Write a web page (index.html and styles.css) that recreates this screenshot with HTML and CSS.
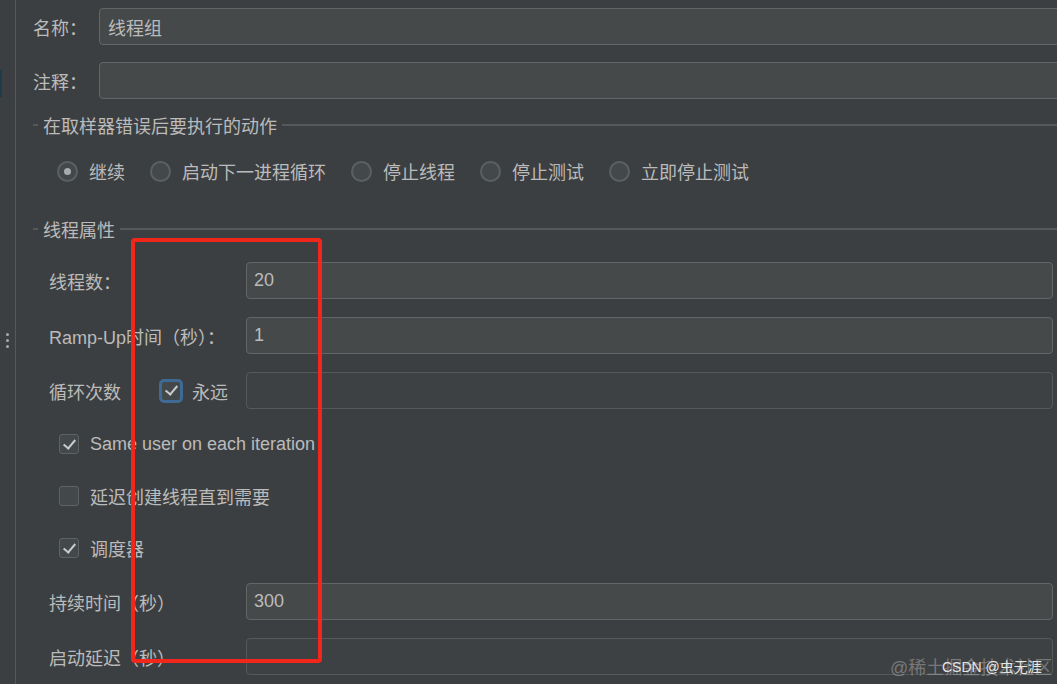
FILE: index.html
```html
<!DOCTYPE html>
<html lang="zh-CN">
<head>
    <meta charset="UTF-8">
    <title>线程组</title>
    <link rel="stylesheet" href="styles.css">
</head>
<body>
    <div class="window">
        <div class="side">
            <div class="side-mark"></div>
            <div class="grip"><span></span><span></span><span></span></div>
        </div>

        <div class="panel">
            <div class="row top-row">
                <label class="top-label">名称：</label>
                <div class="field">线程组</div>
            </div>
            <div class="row top-row gap-17">
                <label class="top-label">注释：</label>
                <div class="field"></div>
            </div>

            <div class="group-title title-1">
                <span class="dash"></span>
                <span class="legend">在取样器错误后要执行的动作</span>
                <span class="line"></span>
            </div>
            <div class="radios">
                <div class="radio-item"><span class="radio on"></span>继续</div>
                <div class="radio-item"><span class="radio"></span>启动下一进程循环</div>
                <div class="radio-item"><span class="radio"></span>停止线程</div>
                <div class="radio-item"><span class="radio"></span>停止测试</div>
                <div class="radio-item"><span class="radio"></span>立即停止测试</div>
            </div>

            <div class="group-title title-2">
                <span class="dash"></span>
                <span class="legend">线程属性</span>
                <span class="line"></span>
            </div>

            <div class="props">
                <div class="row prop">
                    <label class="prop-label">线程数：</label>
                    <div class="field box">20</div>
                </div>
                <div class="row prop">
                    <label class="prop-label">Ramp-Up时间（秒）：</label>
                    <div class="field box">1</div>
                </div>
                <div class="row prop">
                    <label class="loop-label">循环次数</label>
                    <span class="check checked focus"></span>
                    <span class="loop-text">永远</span>
                    <div class="field box disabled"></div>
                </div>
                <div class="row check-row">
                    <span class="check checked"></span>Same user on each iteration
                </div>
                <div class="row check-row">
                    <span class="check"></span>延迟创建线程直到需要
                </div>
                <div class="row check-row">
                    <span class="check checked"></span>调度器
                </div>
                <div class="row prop">
                    <label class="prop-label">持续时间（秒）</label>
                    <div class="field box">300</div>
                </div>
                <div class="row prop">
                    <label class="prop-label">启动延迟（秒）</label>
                    <div class="field box disabled"></div>
                </div>
            </div>
        </div>

        <!-- annotation drawn over the screenshot -->
        <div class="highlight"></div>
        <div class="watermark">
            <span class="wm-back">@稀土掘金技术社区</span>
            <span class="wm-front">CSDN @虫无涯</span>
        </div>
    </div>
</body>
</html>
```

FILE: styles.css
```css
body {
    margin: 0;
    background-color: #3c3f41;
    color: #bbbbbb;
    font-family: "Liberation Sans", "Noto Sans CJK SC", sans-serif;
    font-size: 18px;
    overflow: hidden;
}
.window {
    position: relative;
    display: flex;
    width: 1057px;
    height: 684px;
    overflow: hidden;
}
.side {
    width: 15px;
    border-right: 1px solid #555759;
    display: flex;
    flex-direction: column;
    flex-shrink: 0;
}
.side-mark {
    width: 2px;
    height: 27px;
    margin-top: 70px;
    background-color: #1f3a48;
}
.grip {
    display: flex;
    flex-direction: column;
    gap: 3px;
    margin-top: 236px;
    margin-left: 6px;
}
.grip span {
    width: 3px;
    height: 3px;
    border-radius: 50%;
    background-color: #a9abad;
}
.panel {
    flex: 1;
    padding-top: 8px;
}
.row {
    display: flex;
    align-items: center;
}
.top-row {
    height: 37px;
    padding-left: 17px;
    margin-right: -20px;
}
.gap-17 {
    margin-top: 17px;
}
.top-label {
    width: 66px;
}
.field {
    flex: 1;
    height: 100%;
    box-sizing: border-box;
    border: 1px solid #646566;
    border-radius: 4px;
    background-color: #45494a;
    padding-left: 8px;
    display: flex;
    align-items: center;
}
.group-title {
    display: flex;
    align-items: center;
    height: 24px;
    padding-left: 17px;
}
.title-1 {
    margin-top: 14px;
}
.title-2 {
    margin-top: 34px;
}
.dash {
    width: 5px;
    height: 2px;
    background-color: #55595b;
}
.legend {
    padding: 0 5px;
}
.line {
    flex: 1;
    height: 2px;
    background-color: #55595b;
}
.radios {
    display: flex;
    align-items: center;
    height: 24px;
    margin-top: 22px;
    padding-left: 41px;
    gap: 25px;
}
.radio-item {
    display: flex;
    align-items: center;
    gap: 11px;
}
.radio {
    width: 21px;
    height: 21px;
    box-sizing: border-box;
    border: 2px solid #5c6062;
    border-radius: 50%;
    background-color: #43494a;
    display: flex;
    align-items: center;
    justify-content: center;
}
.radio.on::after {
    content: "";
    width: 7px;
    height: 7px;
    border-radius: 50%;
    background-color: #a9abad;
}
.props {
    display: flex;
    flex-direction: column;
    gap: 18px;
    margin-top: 21px;
    padding-left: 33px;
    padding-right: 4px;
}
.prop {
    height: 37px;
}
.prop-label {
    width: 197px;
    flex-shrink: 0;
}
.box {
    padding-left: 7px;
}
.box.disabled {
    background-color: #3e4143;
    border-color: #56595b;
}
.loop-label {
    width: 110px;
    flex-shrink: 0;
}
.loop-text {
    margin-left: 9px;
    width: 54px;
}
.check-row {
    height: 34px;
    padding-left: 10px;
    gap: 11px;
}
.check {
    width: 20px;
    height: 20px;
    box-sizing: border-box;
    border: 1px solid #5f6264;
    border-radius: 3px;
    background-color: #43494a;
    display: flex;
    align-items: center;
    justify-content: center;
    flex-shrink: 0;
}
.check.checked::after {
    content: "";
    width: 5px;
    height: 10px;
    margin-top: -3px;
    border-right: 2px solid #c9cbcd;
    border-bottom: 2px solid #c9cbcd;
    transform: rotate(40deg);
}
.check.focus {
    width: 24px;
    height: 24px;
    border: 3px solid #3f6a94;
    border-radius: 5px;
    background-color: #43494a;
}
.highlight {
    position: absolute;
    left: 131px;
    top: 238px;
    width: 191px;
    height: 425px;
    box-sizing: border-box;
    border: 4px solid #f2271b;
    border-radius: 4px;
}
.watermark {
    position: absolute;
    left: 890px;
    top: 653px;
    font-size: 18px;
}
.wm-back {
    color: rgba(190, 190, 190, 0.45);
}
.wm-front {
    position: absolute;
    left: 52px;
    top: 3px;
    font-size: 14px;
    color: #e6e6e6;
    white-space: nowrap;
}
```
